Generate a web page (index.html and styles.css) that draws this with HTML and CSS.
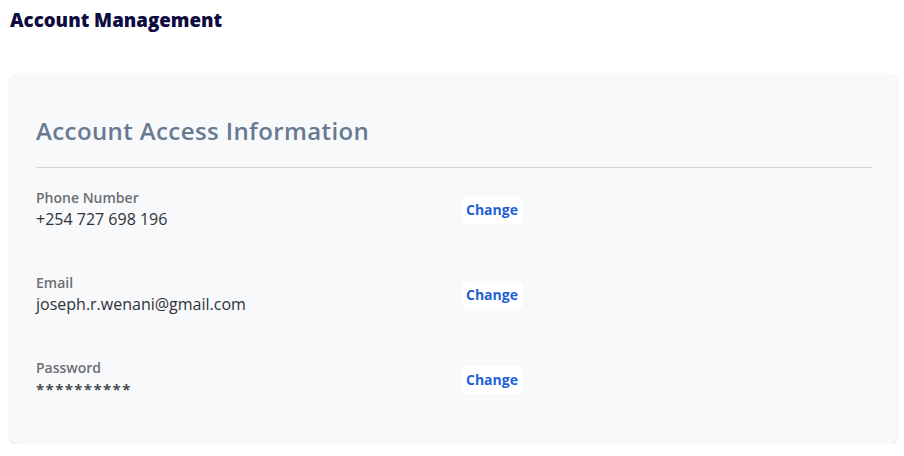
FILE: index.html
```html
<!DOCTYPE html>
<html>
<head>
<meta charset="utf-8">
<link rel="stylesheet" href="styles.css">
</head>
<body>
<div class="page">
  <h1 class="page-title">Account Management</h1>
  <section class="card">
    <h2 class="card-title">Account Access Information</h2>
    <div class="rows">
      <div class="row">
        <div class="info">
          <div class="label">Phone Number</div>
          <div class="value">+254 727 698 196</div>
        </div>
        <button class="change">Change</button>
      </div>
      <div class="row">
        <div class="info">
          <div class="label">Email</div>
          <div class="value">joseph.r.wenani@gmail.com</div>
        </div>
        <button class="change">Change</button>
      </div>
      <div class="row">
        <div class="info">
          <div class="label">Password</div>
          <div class="value stars">**********</div>
        </div>
        <button class="change">Change</button>
      </div>
    </div>
  </section>
</div>
</body>
</html>
```
FILE: styles.css
```css
* { box-sizing: border-box; }
html, body { margin: 0; padding: 0; background: #ffffff; }
body { font-family: "Open Sans", "Lato", sans-serif; }
.page { padding: 8px 7px 0 10px; }
.page-title {
  margin: 0;
  font-size: 18.7px;
  font-weight: 800;
  color: #0e0b40;
  line-height: 24px;
}
.card {
  margin-top: 42px;
  background: #f8f9fb;
  border-radius: 8px;
  box-shadow: 0 1px 3px rgba(0,0,0,0.12), 0 0 1px rgba(0,0,0,0.06);
  padding: 42px 25px 26px 26px;
  height: 370px;
}
.card-title {
  margin: 0;
  font-size: 24px;
  font-weight: 600;
  letter-spacing: 0.4px;
  color: #687a92;
  line-height: 30px;
  padding-bottom: 21px;
  border-bottom: 1px solid #d3d5d9;
}
.rows { display: flex; flex-direction: column; gap: 44px; padding-top: 21px; }
.row { display: flex; align-items: center; }
.info { width: 426px; }
.label { font-size: 14px; font-weight: 600; color: #6d6f74; line-height: 18px; }
.value { font-size: 16px; color: #2f3237; line-height: 22px; margin-top: 1px; }
.stars { letter-spacing: 1.4px; font-weight: 700; color: #4a4d52; font-size: 15px; }
.change {
  font-family: inherit;
  border: none;
  background: #ffffff;
  border-radius: 6px;
  color: #1f5fd6;
  font-weight: 700;
  font-size: 14px;
  padding: 5px 5px 5px 4px;
  line-height: 18px;
  cursor: pointer;
}
```
